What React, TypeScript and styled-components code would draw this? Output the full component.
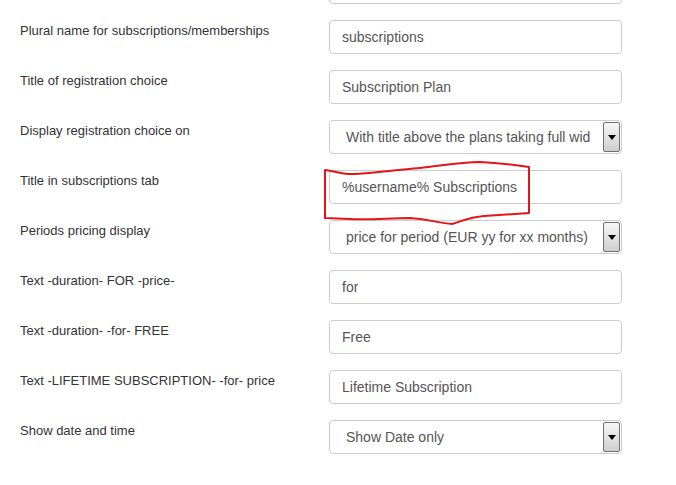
import styled, { createGlobalStyle } from 'styled-components';

const GlobalStyle = createGlobalStyle`
    html, body {
        margin: 0;
        padding: 0;
        background: #fff;
        font-family: "Liberation Sans", Arial, sans-serif;
    }
`;

type Row = { label: string; value: string; select?: boolean };

const rows: Row[] = [
    { label: '', value: '' },
    { label: 'Plural name for subscriptions/memberships', value: 'subscriptions' },
    { label: 'Title of registration choice', value: 'Subscription Plan' },
    { label: 'Display registration choice on', value: 'With title above the plans taking full wid', select: true },
    { label: 'Title in subscriptions tab', value: '%username% Subscriptions' },
    { label: 'Periods pricing display', value: 'price for period (EUR yy for xx months)', select: true },
    { label: 'Text -duration- FOR -price-', value: 'for' },
    { label: 'Text -duration- -for- FREE', value: 'Free' },
    { label: 'Text -LIFETIME SUBSCRIPTION- -for- price', value: 'Lifetime Subscription' },
    { label: 'Show date and time', value: 'Show Date only', select: true },
];

function App() {
    return (
        <Page>
            <GlobalStyle />
            <Form>
                {rows.map((row, i) => (
                    <FormRow key={i}>
                        <Label>{row.label}</Label>
                        <Field $select={row.select}>
                            <FieldText>{row.value}</FieldText>
                            {row.select && (
                                <ArrowButton>
                                    <svg width="8" height="5" viewBox="0 0 8 5">
                                        <path d="M0 0 H8 L4 5 Z" fill="#000" />
                                    </svg>
                                </ArrowButton>
                            )}
                        </Field>
                    </FormRow>
                ))}
            </Form>
            <Scribble viewBox="0 0 676 485" width="676" height="485">
                <path
                    d="M325 219 L325 170 C335 171 345 175 356 174 C375 173 395 170 420 168 C440 166 460 162 480 162 C500 163 515 165 529 167 L529 213 C515 214 500 215 484 216 C470 217 462 221 452 224 C440 223 425 219 410 218 C390 218 370 220 350 219 L325 218"
                    fill="none"
                    stroke="#e3151a"
                    strokeWidth="2"
                    strokeLinejoin="round"
                />
            </Scribble>
        </Page>
    );
}

export default App;


const Page = styled.div`
    position: relative;
    width: 676px;
    height: 485px;
    overflow: hidden;
`;

const Form = styled.div`
    display: flex;
    flex-direction: column;
    gap: 16px;
    margin-top: -30px;
    padding-left: 20px;
`;

const FormRow = styled.div`
    display: grid;
    grid-template-columns: 309px 293px;
    align-items: start;
`;

const Label = styled.div`
    padding-top: 2px;
    font-size: 13px;
    line-height: 18px;
    color: #333;
`;

const Field = styled.div<{ $select?: boolean }>`
    box-sizing: border-box;
    height: 34px;
    display: flex;
    align-items: center;
    justify-content: space-between;
    border: 1px solid #ccc;
    border-radius: 4px;
    padding: ${p => (p.$select ? '0 0 0 16px' : '0 12px')};
    font-size: 14px;
    color: #555;
    background: #fff;
`;

const FieldText = styled.span`
    white-space: nowrap;
    overflow: hidden;
`;

const ArrowButton = styled.span`
    box-sizing: border-box;
    flex: none;
    width: 17px;
    height: 30px;
    margin-right: 1px;
    display: flex;
    align-items: center;
    justify-content: center;
    border: 1px solid #707070;
    border-radius: 2px;
    background: linear-gradient(#f6f6f6, #cfcfcf);
`;

const Scribble = styled.svg`
    position: absolute;
    left: 0;
    top: 0;
    pointer-events: none;
`;
